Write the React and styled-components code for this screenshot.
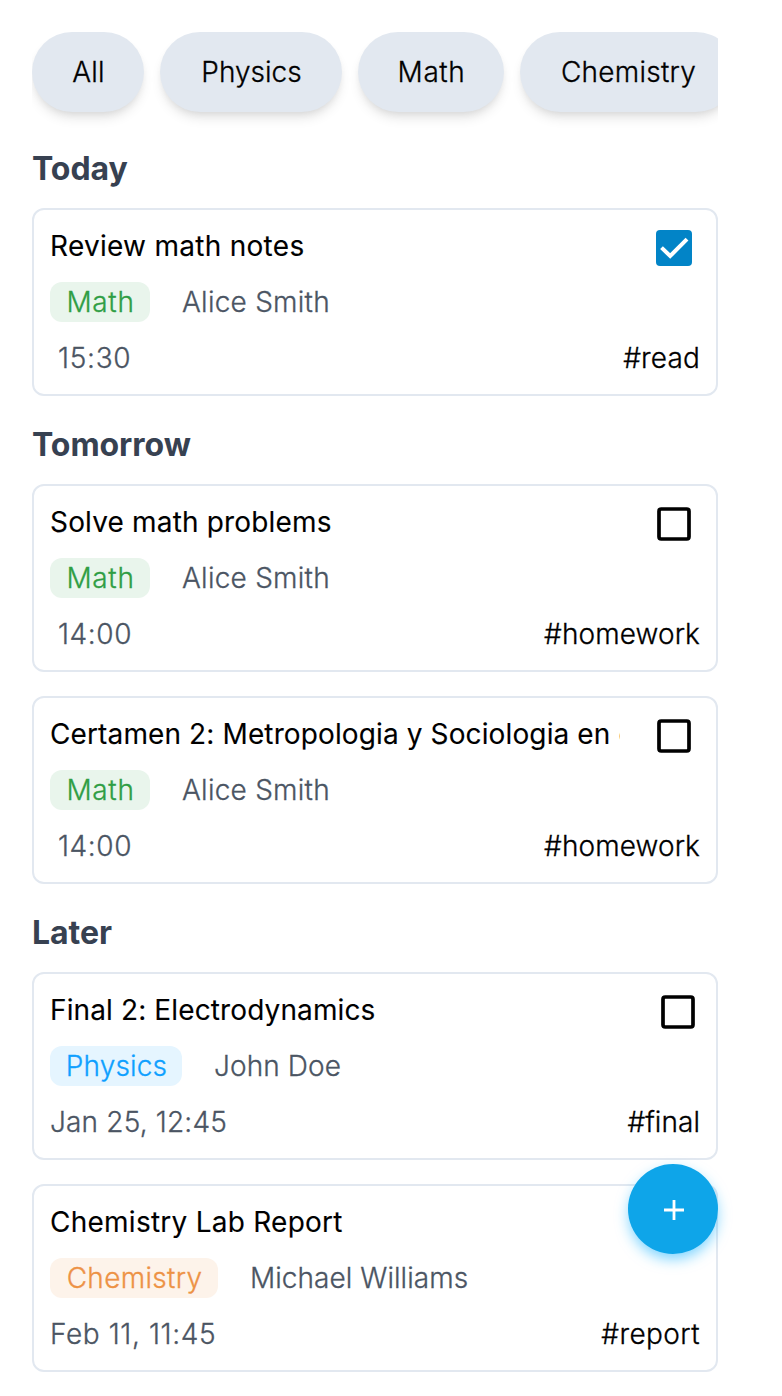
import React from "react";
import styled, { createGlobalStyle } from "styled-components";

const GlobalStyle = createGlobalStyle`
  *, *::before, *::after { box-sizing: border-box; }
  html { scrollbar-width: none; }
  body {
    margin: 0;
    background: #fff;
    color: #000;
    font-family: Inter, "Liberation Sans", sans-serif;
    font-size: 28px;
    line-height: 40px;
    font-weight: 300;
    letter-spacing: 0.25px;
    -webkit-text-stroke-width: 0.3px;
  }
`;

const Page = styled.main`
  position: relative;
  width: 782px;
  height: 1396px;
  padding: 32px 64px 24px 32px;
  overflow: hidden;
`;

const FilterBar = styled.nav`
  display: flex;
  gap: 16px;
  padding-bottom: 32px;
  overflow: hidden;
`;

const FilterPill = styled.button`
  flex: none;
  width: ${(p) => p.$width}px;
  height: 80px;
  padding: 0 0 0 1px;
  border: 0;
  border-radius: 40px;
  background: #e2e8f0;
  color: #000;
  font: inherit;
  letter-spacing: ${(p) => p.$tracking}px;
  box-shadow: 0 8px 12px -2px rgba(0, 0, 0, 0.1), 0 4px 8px -4px rgba(0, 0, 0, 0.1);
`;

const Section = styled.section`
  display: flex;
  flex-direction: column;
  margin-bottom: 24px;
`;

const SectionTitle = styled.h2`
  height: 48px;
  margin: 0 0 16px;
  padding-top: 1px;
  font-size: 32px;
  line-height: 48px;
  font-weight: 700;
  letter-spacing: -0.05px;
  color: #374151;
  -webkit-text-stroke-width: 0;
`;

const CardList = styled.div`
  display: flex;
  flex-direction: column;
  gap: 24px;
`;

const Card = styled.article`
  display: flex;
  flex-direction: column;
  gap: 16px;
  height: 188px;
  padding: 16px;
  border: 2px solid #e2e8f0;
  border-radius: 12px;
`;

const Row = styled.div`
  display: flex;
  align-items: center;
  justify-content: ${(p) => (p.$spread ? "space-between" : "flex-start")};
  gap: ${(p) => (p.$spread ? 0 : "32px")};
  height: 40px;
`;

const TaskTitle = styled.h3`
  width: 570px;
  margin: 0;
  font-size: 28px;
  font-weight: 400;
  letter-spacing: ${(p) => p.$tracking}px;
  white-space: nowrap;
  overflow: hidden;
  -webkit-text-stroke-width: 0.1px;
`;

const Checkbox = styled.svg`
  flex: none;
  width: 48px;
  height: 48px;
  margin: 4px ${(p) => p.$inset}px 0 0;
`;

const tones = {
  Math: { background: "#e9f5ec", color: "#2f9e44", width: 100, tracking: 0.7 },
  Physics: { background: "#e5f5ff", color: "#0ea0ff", width: 132, tracking: 0.15 },
  Chemistry: { background: "#fdf3ea", color: "#ed9245", width: 168, tracking: 0.3 },
};

const Subject = styled.span`
  width: ${(p) => p.$tone.width}px;
  height: 40px;
  padding-left: 1px;
  border-radius: 12px;
  text-align: center;
  background: ${(p) => p.$tone.background};
  color: ${(p) => p.$tone.color};
  letter-spacing: ${(p) => p.$tone.tracking}px;
`;

const Muted = styled.span`
  color: #4b5563;
  letter-spacing: ${(p) => p.$tracking}px;
`;

const Time = styled(Muted)`
  padding-left: ${(p) => (p.$short ? 8 : 0)}px;
`;

const Tag = styled.span`
  color: #000;
  letter-spacing: ${(p) => p.$tracking}px;
`;

const AddButton = styled.button`
  position: absolute;
  left: 628px;
  top: 1164px;
  display: grid;
  place-items: center;
  width: 90px;
  height: 90px;
  padding: 0;
  border: 0;
  border-radius: 50%;
  background: #0ea5e9;
  box-shadow: 0 6px 14px -1px rgba(14, 175, 255, 0.55);
`;

const filters = [
  { label: "All", width: 112, tracking: 0.2 },
  { label: "Physics", width: 182, tracking: 0 },
  { label: "Math", width: 146, tracking: 0.6 },
  { label: "Chemistry", width: 216, tracking: 0.25 },
];

// Tracking values are listed in the order title, teacher, time, tag.
const sections = [
  {
    title: "Today",
    tasks: [
      { title: "Review math notes", subject: "Math", teacher: "Alice Smith", time: "15:30", tag: "#read", done: true, short: true, tracking: [0.28, 0.25, 0.7, 0.15] },
    ],
  },
  {
    title: "Tomorrow",
    tasks: [
      { title: "Solve math problems", subject: "Math", teacher: "Alice Smith", time: "14:00", tag: "#homework", short: true, tracking: [0.17, 0.25, 0.6, 0.1] },
      { title: "Certamen 2: Metropologia y Sociologia en el siglo XXI", subject: "Math", teacher: "Alice Smith", time: "14:00", tag: "#homework", short: true, tracking: [0.12, 0.25, 0.6, 0.1] },
    ],
  },
  {
    title: "Later",
    tasks: [
      { title: "Final 2: Electrodynamics", subject: "Physics", teacher: "John Doe", time: "Jan 25, 12:45", tag: "#final", tracking: [0.12, 0.1, 0.17, 0.05] },
      { title: "Chemistry Lab Report", subject: "Chemistry", teacher: "Michael Williams", time: "Feb 11, 11:45", tag: "#report", tracking: [0.25, 0.05, 0.6, 0.4] },
    ],
  },
];

function CheckIcon({ done, inset }) {
  return (
    <Checkbox viewBox="0 0 48 48" $inset={inset}>
      {done ? (
        <>
          <rect x="6" y="6" width="36" height="36" rx="4" fill="#0284c7" />
          <path d="M11.5 23.6 L20.2 32 L37 15.2" fill="none" stroke="#fff" strokeWidth="4" />
        </>
      ) : (
        <rect x="9" y="9" width="30" height="30" rx="2.2" fill="none" stroke="#000" strokeWidth="3.7" />
      )}
    </Checkbox>
  );
}

function TaskCard({ task }) {
  const [titleTracking, teacherTracking, timeTracking, tagTracking] = task.tracking;
  return (
    <Card>
      <Row $spread>
        <TaskTitle $tracking={titleTracking}>{task.title}</TaskTitle>
        <CheckIcon done={task.done} inset={task.short ? 2 : -2} />
      </Row>
      <Row>
        <Subject $tone={tones[task.subject]}>{task.subject}</Subject>
        <Muted $tracking={teacherTracking}>{task.teacher}</Muted>
      </Row>
      <Row $spread>
        <Time $short={task.short} $tracking={timeTracking}>{task.time}</Time>
        <Tag $tracking={tagTracking}>{task.tag}</Tag>
      </Row>
    </Card>
  );
}

export default function App() {
  return (
    <Page>
      <GlobalStyle />
      <FilterBar>
        {filters.map((f) => (
          <FilterPill key={f.label} $width={f.width} $tracking={f.tracking}>{f.label}</FilterPill>
        ))}
      </FilterBar>
      {sections.map((s) => (
        <Section key={s.title}>
          <SectionTitle>{s.title}</SectionTitle>
          <CardList>
            {s.tasks.map((t) => (
              <TaskCard key={t.title} task={t} />
            ))}
          </CardList>
        </Section>
      ))}
      <AddButton aria-label="Add task">
        <svg width="24" height="24" viewBox="0 0 24 24">
          <path d="M3 13H23M13 3V23" stroke="#fff" strokeWidth="2.8" />
        </svg>
      </AddButton>
    </Page>
  );
}
